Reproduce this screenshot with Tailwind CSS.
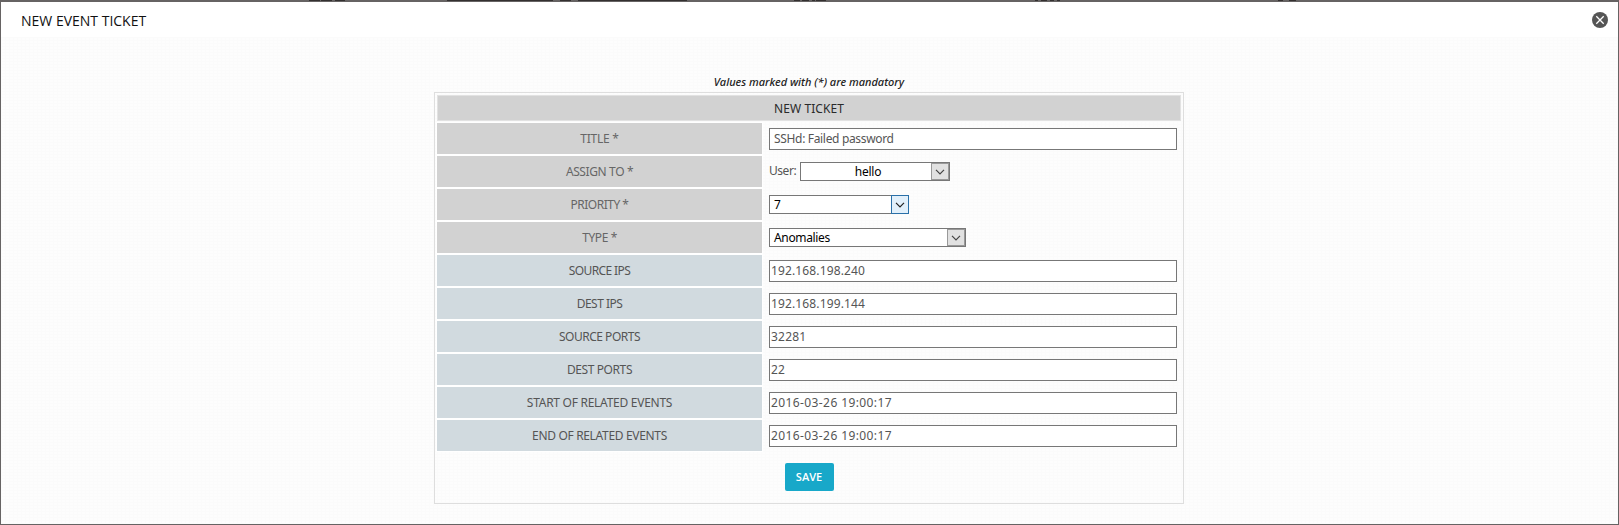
<!DOCTYPE html>
<html lang="en">
<head>
<meta charset="utf-8">
<title>New Event Ticket</title>
<script src="https://cdn.jsdelivr.net/npm/@tailwindcss/browser@4"></script>
</head>
<body class="h-[525px] w-[1619px] overflow-hidden bg-[#666363] font-['Noto_Sans','Open_Sans',sans-serif] text-[12px] text-[#555]">
<div class="flex h-full flex-col">
  <!-- page strip behind the dialog -->
  <div class="flex h-[2px] items-start *:h-px *:bg-[#333030]">
    <i class="ml-[309px] w-[11px]"></i><i class="ml-px w-[11px]"></i><i class="ml-[3px] w-[10px]"></i>
    <i class="ml-[102px] w-[106px]"></i><i class="ml-[7px] w-[11px]"></i><i class="ml-[7px] w-[109px]"></i>
    <i class="ml-[107px] w-[6px]"></i><i class="ml-[2px] w-[7px]"></i><i class="ml-[3px] w-[3px]"></i><i class="ml-px w-[10px]"></i>
    <i class="ml-[209px] w-[3px]"></i><i class="ml-[3px] w-[6px]"></i><i class="ml-[3px] w-[4px]"></i><i class="ml-[3px] w-[3px]"></i>
    <i class="ml-[218px] w-[5px]"></i><i class="ml-[6px] w-[7px]"></i>
  </div>
  <div class="mx-px mb-px flex flex-1 flex-col bg-[#fcfcfc]">
    <header class="flex h-[35px] items-center justify-between bg-white pr-[10px] pl-[20px]">
      <h1 class="pt-[2px] font-['Open_Sans',sans-serif] text-[14px] leading-[20px] text-[#111]">NEW EVENT TICKET</h1>
      <button aria-label="Close" class="mt-px"><svg class="block" width="16" height="16" viewBox="0 0 16 16"><circle cx="8" cy="8" r="8" fill="#555"/><path d="M4.3 4.3l7.4 7.4M11.7 4.3l-7.4 7.4" stroke="#fff" stroke-width="1.3"/></svg></button>
    </header>
    <main class="flex flex-1 flex-col items-center bg-[repeating-linear-gradient(90deg,#fbfbfb_0_1px,transparent_1px_4px),repeating-linear-gradient(0deg,#fbfbfb_0_1px,#fdfdfd_1px_3px)] pr-px">
      <p class="mt-[37px] mb-[2px] h-[16px] text-[11px] leading-[16px] font-medium italic text-[#222]">Values marked with (*) are mandatory</p>
      <form class="flex h-[412px] w-[750px] flex-col border border-[#dedede] px-[2px] pt-[2px]">
        <h2 class="flex h-[26px] items-center justify-center border border-[#e2e2e2] bg-[#d2d2d2] pt-px text-[12px] tracking-[0.1px] text-[#2a2a2a]">NEW TICKET</h2>
        <div class="grid grid-cols-[325px_408px] gap-x-[7px] gap-y-[2px] pt-[2px]">
          <label class="flex h-[31px] items-center justify-center bg-[#d2d2d2] tracking-[-0.25px] text-[#666] shadow-[0_0_0_1px_#fff]">TITLE *</label>
          <div class="mt-[5px] flex h-[22px] items-center border border-[#777] bg-white pl-[4px] tracking-[-0.33px]">SSHd: Failed password</div>

          <label class="flex h-[31px] items-center justify-center bg-[#d2d2d2] tracking-[-0.38px] text-[#666] shadow-[0_0_0_1px_#fff]">ASSIGN TO *</label>
          <div class="flex pt-[6px]"><span class="w-[31px] leading-[17px] tracking-[-0.45px]">User:</span>
            <div class="flex h-[19px] w-[150px] border border-[#777] bg-white text-black"><span class="flex-1 pl-[4px] text-center leading-[18px] tracking-[-0.2px]">hello</span><span class="flex w-[18px] items-center justify-center border border-[#999] bg-[#e1e1e1]"><svg width="10" height="6" viewBox="0 0 10 6" fill="none" stroke="#444" stroke-width="1.2"><path d="M1 .8l4 4 4-4"/></svg></span></div></div>

          <label class="flex h-[31px] items-center justify-center bg-[#d2d2d2] tracking-[-0.5px] text-[#666] shadow-[0_0_0_1px_#fff]">PRIORITY *</label>
          <div class="pt-[6px]"><div class="flex h-[19px] w-[140px] border border-[#777] bg-white text-black"><span class="flex-1 pl-[4px] leading-[18px]">7</span><span class="-my-px -mr-px flex w-[18px] items-center justify-center border border-[#2a70a8] bg-[#e2f0fb]"><svg width="10" height="6" viewBox="0 0 10 6" fill="none" stroke="#222" stroke-width="1.2"><path d="M1 .8l4 4 4-4"/></svg></span></div></div>

          <label class="flex h-[31px] items-center justify-center bg-[#d2d2d2] tracking-[-0.4px] text-[#666] shadow-[0_0_0_1px_#fff]">TYPE *</label>
          <div class="pt-[6px]"><div class="flex h-[19px] w-[197px] border border-[#777] bg-white text-black"><span class="flex-1 pl-[4px] leading-[18px] tracking-[-0.35px]">Anomalies</span><span class="flex w-[18px] items-center justify-center border border-[#999] bg-[#e1e1e1]"><svg width="10" height="6" viewBox="0 0 10 6" fill="none" stroke="#444" stroke-width="1.2"><path d="M1 .8l4 4 4-4"/></svg></span></div></div>

          <label class="flex h-[31px] items-center justify-center bg-[#d1dadf] tracking-[-0.6px] shadow-[0_0_0_1px_#fff]">SOURCE IPS</label>
          <div class="mt-[5px] flex h-[22px] items-center border border-[#777] bg-white pl-px tracking-[0.13px]">192.168.198.240</div>
          <label class="flex h-[31px] items-center justify-center bg-[#d1dadf] tracking-[-0.5px] shadow-[0_0_0_1px_#fff]">DEST IPS</label>
          <div class="mt-[5px] flex h-[22px] items-center border border-[#777] bg-white pl-px tracking-[0.13px]">192.168.199.144</div>
          <label class="flex h-[31px] items-center justify-center bg-[#d1dadf] tracking-[-0.48px] shadow-[0_0_0_1px_#fff]">SOURCE PORTS</label>
          <div class="mt-[5px] flex h-[22px] items-center border border-[#777] bg-white pl-px tracking-[0.2px]">32281</div>
          <label class="flex h-[31px] items-center justify-center bg-[#d1dadf] tracking-[-0.4px] shadow-[0_0_0_1px_#fff]">DEST PORTS</label>
          <div class="mt-[5px] flex h-[22px] items-center border border-[#777] bg-white pl-px tracking-[0.2px]">22</div>
          <label class="flex h-[31px] items-center justify-center bg-[#d1dadf] tracking-[-0.27px] shadow-[0_0_0_1px_#fff]">START OF RELATED EVENTS</label>
          <div class="mt-[5px] flex h-[22px] items-center border border-[#777] bg-white pl-px tracking-[0.4px]">2016-03-26 19:00:17</div>
          <label class="flex h-[31px] items-center justify-center bg-[#d1dadf] tracking-[-0.33px] shadow-[0_0_0_1px_#fff]">END OF RELATED EVENTS</label>
          <div class="mt-[5px] flex h-[22px] items-center border border-[#777] bg-white pl-px tracking-[0.4px]">2016-03-26 19:00:17</div>
        </div>
        <button type="button" class="mt-[12px] h-[28px] w-[49px] self-center rounded-[2px] bg-[#18a8c9] font-['Open_Sans',sans-serif] text-[11px] font-semibold text-white">SAVE</button>
      </form>
    </main>
  </div>
</div>
</body>
</html>
